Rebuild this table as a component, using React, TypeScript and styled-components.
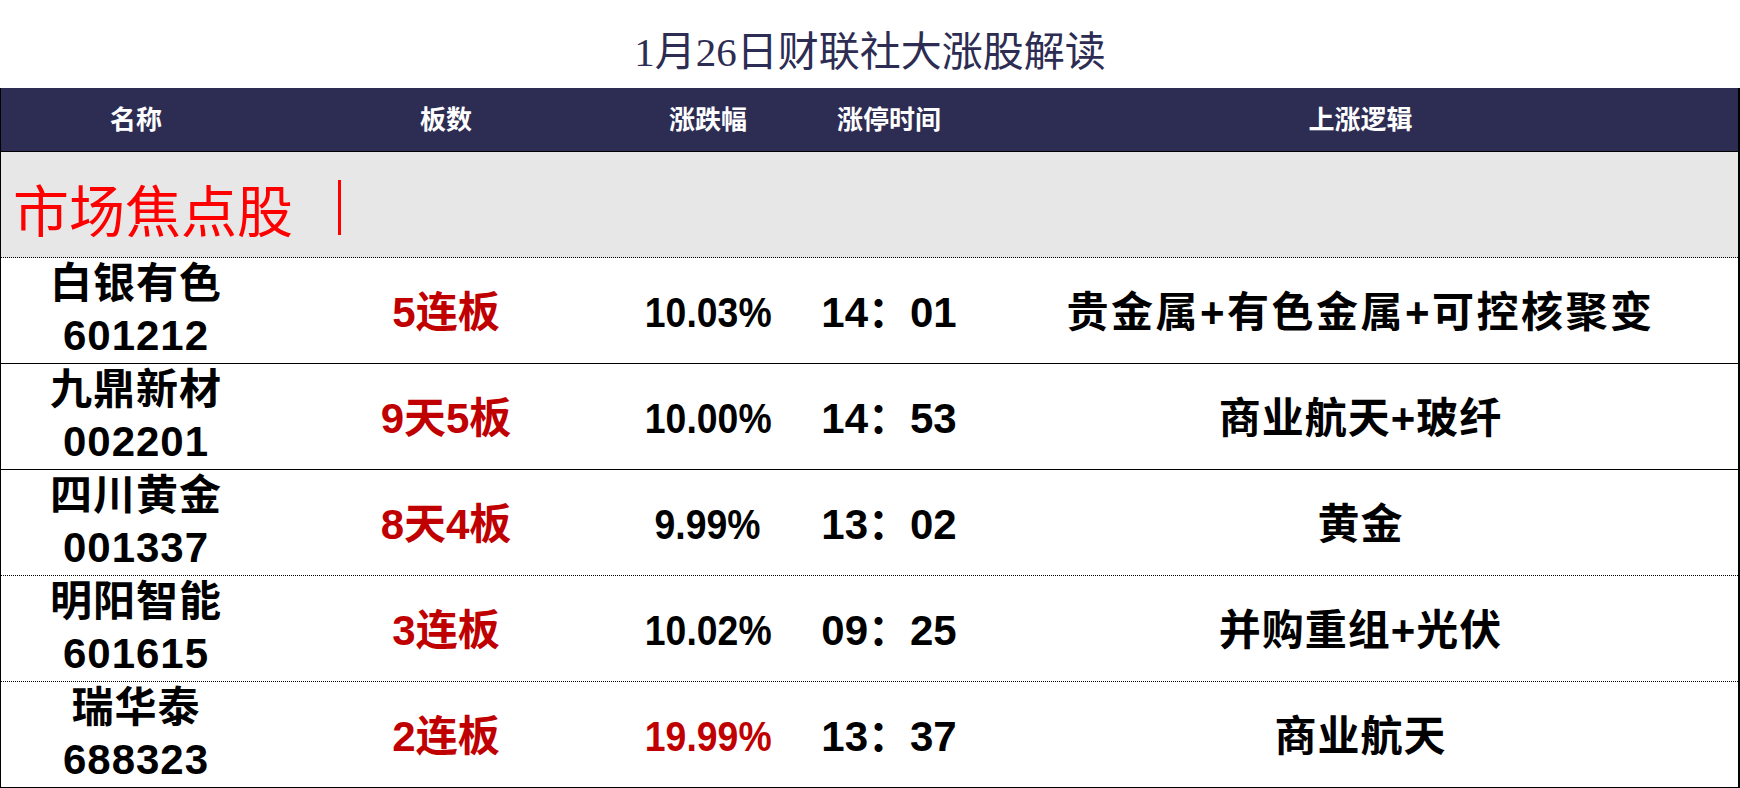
import React from 'react'
import styled, { createGlobalStyle } from 'styled-components'

const GlobalStyle = createGlobalStyle`
  * {
    box-sizing: border-box;
  }
  body {
    margin: 0;
    background: #fff;
  }
`

const cjkSans = `"Liberation Sans", "Noto Sans CJK SC", sans-serif`
const cjkSerif = `"Liberation Serif", "Noto Sans CJK SC", serif`

const Page = styled.div`
  width: 1740px;
  height: 788px;
  overflow: hidden;
  background: #fff;
`

const Title = styled.h1`
  margin: 0;
  height: 88px;
  display: flex;
  align-items: center;
  justify-content: center;
  padding-top: 8px;
  font-family: ${cjkSerif};
  font-weight: 400;
  font-size: 41px;
  color: #2d2c53;
`

const Table = styled.div`
  border-left: 1px solid #000;
  border-right: 2px solid #000;
`

const columns = '270px 350px 174px 188px 1fr'

const HeaderRow = styled.div`
  display: grid;
  grid-template-columns: ${columns};
  height: 64px;
  background: #2d2c53;
  border-bottom: 1px solid #000;
`

const HeaderCell = styled.div`
  display: flex;
  align-items: center;
  justify-content: center;
  padding-bottom: 4px;
  font-family: ${cjkSans};
  font-weight: 700;
  font-size: 26px;
  color: #fff;
`

const SectionRow = styled.div`
  height: 106px;
  background: #e7e7e7;
  border-bottom: 1px dotted #000;
  display: flex;
  align-items: center;
  padding: 6px 0 0 12px;
  font-family: ${cjkSerif};
  font-size: 56px;
  color: #ff0000;
`

const Bar = styled.span`
  display: inline-block;
  width: 3px;
  height: 55px;
  margin-left: 45px;
  background: #ff0000;
`

const Row = styled.div<{ $line: 'solid' | 'dotted' }>`
  display: grid;
  grid-template-columns: ${columns};
  height: 106px;
  border-bottom: 1px ${({ $line }) => $line} #000;
  font-family: ${cjkSans};
  font-weight: 700;
  font-size: 42px;
  line-height: 52px;
  color: #000;
`

const Cell = styled.div<{ $red?: boolean }>`
  display: flex;
  align-items: center;
  justify-content: center;
  text-align: center;
  white-space: nowrap;
  padding-top: 4px;
  color: ${({ $red }) => ($red ? '#c00000' : '#000')};
`

const NameCell = styled.div`
  display: flex;
  flex-direction: column;
  align-items: center;
  justify-content: center;
  padding-bottom: 2px;
  letter-spacing: 1px;
`

const Percent = styled.span`
  display: inline-block;
  transform: scaleX(0.89);
`

const Logic = styled(Cell)<{ $spacing?: number }>`
  letter-spacing: ${({ $spacing = 1 }) => $spacing}px;
`

interface Stock {
  name: string
  code: string
  boards: string
  change: string
  time: string
  logic: string
  line: 'solid' | 'dotted'
  changeRed?: boolean
  spacing?: number
}

const stocks: Stock[] = [
  { name: '白银有色', code: '601212', boards: '5连板', change: '10.03%', time: '14：01', logic: '贵金属+有色金属+可控核聚变', line: 'solid', spacing: 2.5 },
  { name: '九鼎新材', code: '002201', boards: '9天5板', change: '10.00%', time: '14：53', logic: '商业航天+玻纤', line: 'solid' },
  { name: '四川黄金', code: '001337', boards: '8天4板', change: '9.99%', time: '13：02', logic: '黄金', line: 'dotted' },
  { name: '明阳智能', code: '601615', boards: '3连板', change: '10.02%', time: '09：25', logic: '并购重组+光伏', line: 'dotted' },
  { name: '瑞华泰', code: '688323', boards: '2连板', change: '19.99%', time: '13：37', logic: '商业航天', line: 'solid', changeRed: true },
]

export default function App() {
  return (
    <Page>
      <GlobalStyle />
      <Title>1月26日财联社大涨股解读</Title>
      <Table>
        <HeaderRow>
          <HeaderCell>名称</HeaderCell>
          <HeaderCell>板数</HeaderCell>
          <HeaderCell>涨跌幅</HeaderCell>
          <HeaderCell>涨停时间</HeaderCell>
          <HeaderCell>上涨逻辑</HeaderCell>
        </HeaderRow>
        <SectionRow>
          市场焦点股
          <Bar />
        </SectionRow>
        {stocks.map((s) => (
          <Row key={s.code} $line={s.line}>
            <NameCell>
              <span>{s.name}</span>
              <span>{s.code}</span>
            </NameCell>
            <Cell $red>{s.boards}</Cell>
            <Cell $red={s.changeRed}>
              <Percent>{s.change}</Percent>
            </Cell>
            <Cell>{s.time}</Cell>
            <Logic $spacing={s.spacing}>{s.logic}</Logic>
          </Row>
        ))}
      </Table>
    </Page>
  )
}
